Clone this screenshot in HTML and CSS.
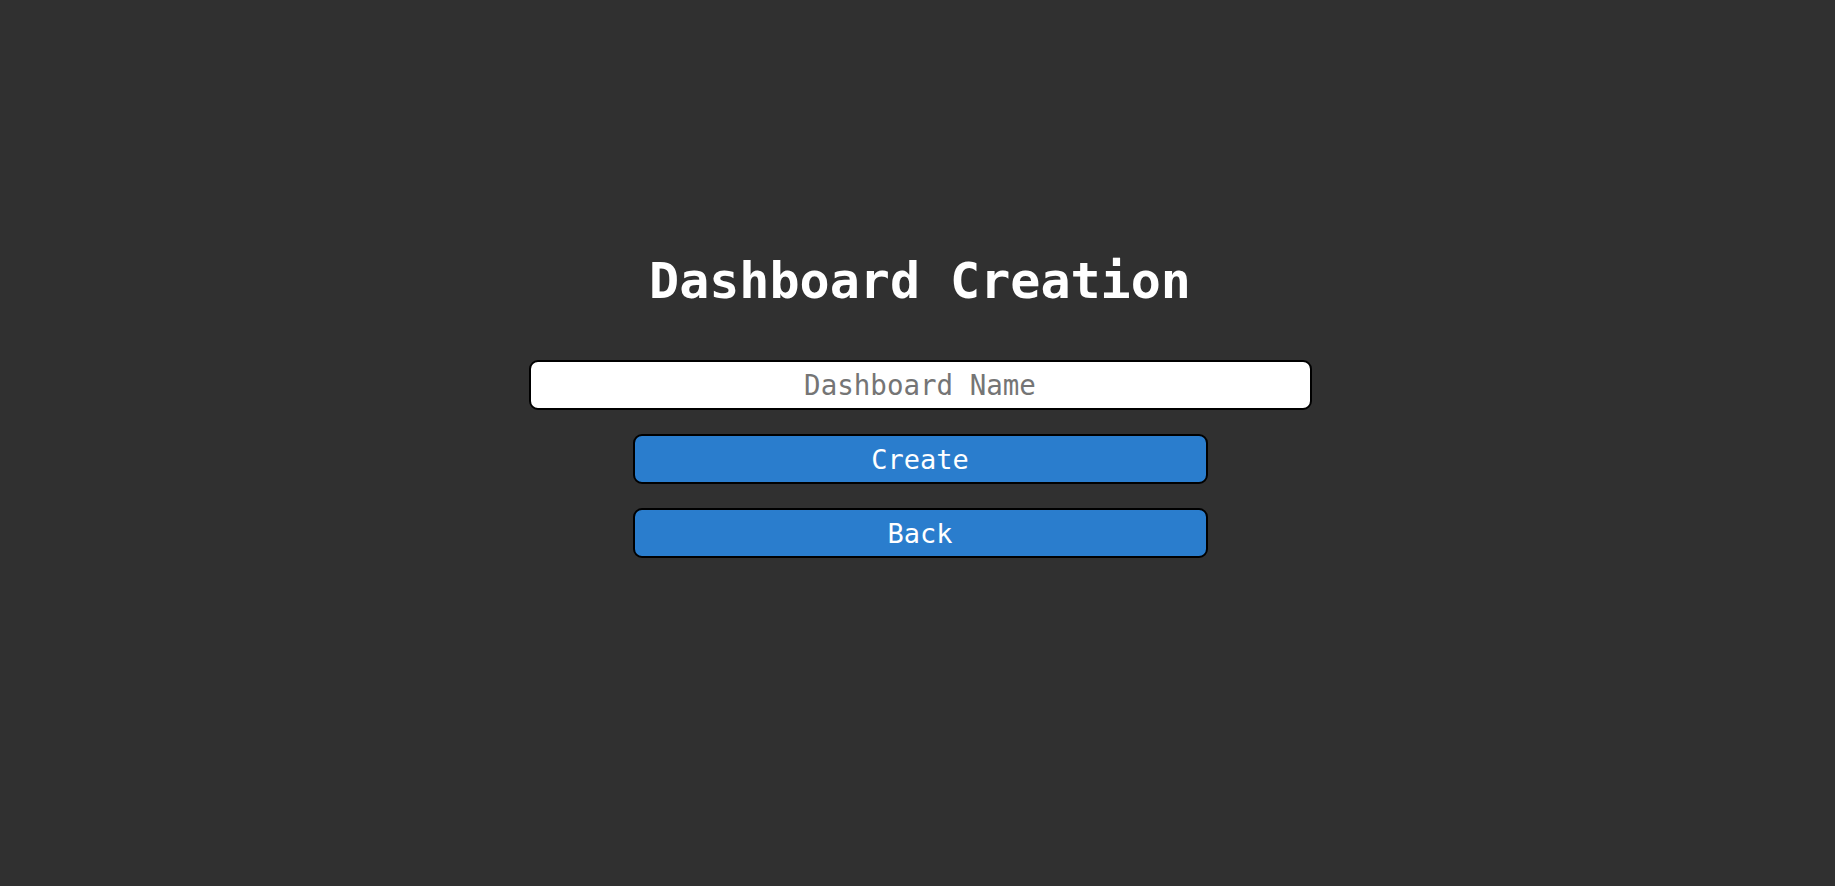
FILE: index.html
```html
<!DOCTYPE html>
<html>
<head>
<meta charset="utf-8">
<link rel="stylesheet" href="styles.css">
</head>
<body>
<main class="page">
  <h1 class="title">Dashboard Creation</h1>
  <input class="name-input" type="text" placeholder="Dashboard Name">
  <button class="btn">Create</button>
  <button class="btn">Back</button>
</main>
</body>
</html>
```
FILE: styles.css
```css
html, body {
  margin: 0;
  padding: 0;
  background: #303030;
  height: 100%;
}
.page {
  display: flex;
  flex-direction: column;
  align-items: center;
  padding-top: 252px;
  padding-left: 5px;
  font-family: "DejaVu Sans Mono", monospace;
}
.title {
  margin: 0 0 50px 0;
  font-size: 50px;
  line-height: 58px;
  font-weight: bold;
  color: #ffffff;
}
.name-input {
  box-sizing: border-box;
  width: 783px;
  height: 50px;
  border: 2px solid #000000;
  border-radius: 9px;
  background: #ffffff;
  font-family: "DejaVu Sans Mono", monospace;
  font-size: 27.5px;
  text-align: center;
  color: #222;
  padding: 0;
  margin: 0 0 24px 0;
  outline: none;
}
.name-input::placeholder {
  color: #757575;
}
.btn {
  box-sizing: border-box;
  width: 575px;
  height: 50px;
  border: 2px solid #000000;
  border-radius: 9px;
  background: #2a7dcd;
  color: #ffffff;
  font-family: "DejaVu Sans Mono", monospace;
  font-size: 27px;
  padding: 0;
  margin: 0 0 24px 0;
}
```
